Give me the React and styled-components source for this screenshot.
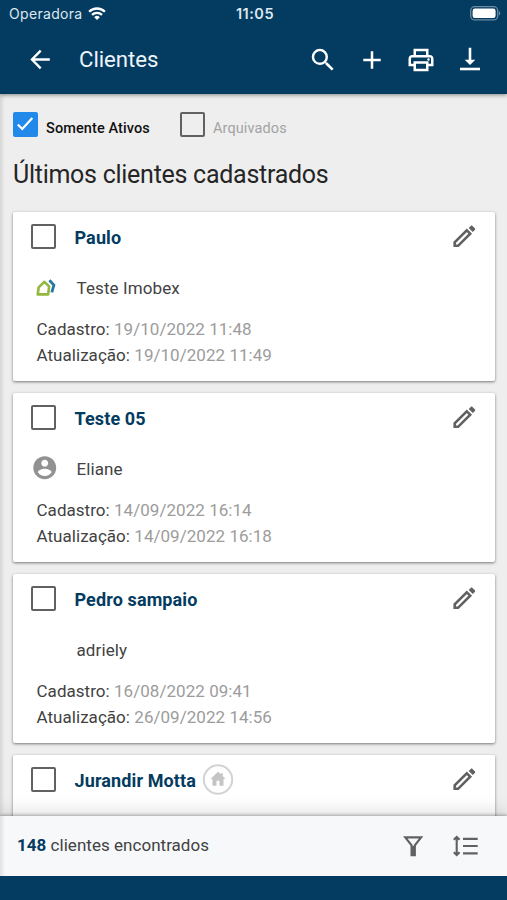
import React, { Component } from 'react';
import styled, { createGlobalStyle } from 'styled-components';

const navy = "#043b60";
const grey2 = "#252525";
const grey4 = "#424242";
const grey6 = "#616161";
const grey9 = "#9c9c9c";
const greyc = "#c4c4c4";
const greye = "#eeeeee";
const white = "#ffffff";

const GlobalStyle = createGlobalStyle`
    * { box-sizing: border-box; }
    body {
        margin: 0;
        background-color: ${greye};
        font-family: Roboto, "Liberation Sans", sans-serif;
        -webkit-font-smoothing: antialiased;
    }
`;

const Screen = styled.div`
    display: flex;
    flex-direction: column;
    width: 507px;
    height: 900px;
    overflow: hidden;
    background: linear-gradient(to right, #d6d6d6, ${greye} 5px);
`;

const Header = styled.header`
    position: relative;
    z-index: 2;
    flex: none;
    height: 94px;
    color: ${white};
    background-color: ${navy};
    box-shadow: 0 1px 4px rgba(0, 0, 0, 0.45);
`;

const StatusBar = styled.div`
    display: grid;
    grid-template-columns: 1fr auto 1fr;
    align-items: center;
    height: 27px;
    padding: 0 6px 0 9px;
    color: #dfe8ef;
`;

const Carrier = styled.span`
    display: flex;
    align-items: center;
    gap: 5px;
    font-family: Inter, Roboto, sans-serif;
    font-size: 14px;
    letter-spacing: 0.32px;
`;

const Clock = styled.span`
    font-family: Inter, Roboto, sans-serif;
    font-size: 14.5px;
    font-weight: 600;
    letter-spacing: 0.5px;
`;

const Battery = styled.svg`
    justify-self: end;
`;

const Toolbar = styled.div`
    display: flex;
    align-items: center;
    height: 66px;
    padding: 0 22px 0 25px;
`;

const Title = styled.h1`
    flex: 1;
    margin: -2px 0 0 24px;
    font-size: 22.2px;
    font-weight: 400;
    letter-spacing: -0.05px;
    color: #edf4fa;
`;

const Actions = styled.div`
    display: flex;
    gap: 19px;
`;

const IconButton = styled.button`
    display: flex;
    padding: 0;
    border: 0;
    color: inherit;
    background: none;
`;

const Content = styled.main`
    flex: 1;
    min-height: 0;
    overflow: hidden;
    padding: 17px 12px 0 13px;
`;

const Filters = styled.div`
    display: flex;
    height: 27px;
`;

const FilterItem = styled.label`
    display: flex;
    align-items: center;
    width: 167px;
    height: 27px;
`;

const FilterText = styled.span`
    margin: 7px 0 0 8px;
    font-size: 14.5px;
    font-weight: ${props => props.$active ? 500 : 400};
    letter-spacing: 0.1px;
    color: ${props => props.$active ? "#111111" : "#a3a3a3"};
`;

const Box = styled.span`
    display: flex;
    align-items: center;
    justify-content: center;
    flex: none;
    width: 25px;
    height: 25px;
    border: 2px solid ${props => props.$checked ? "#2089ea" : grey6};
    border-radius: 2px;
    background-color: ${props => props.$checked ? "#2089ea" : "transparent"};
`;

const Heading = styled.h2`
    margin: 21px 0 22px;
    font-size: 25px;
    font-weight: 400;
    line-height: 31px;
    letter-spacing: -0.27px;
    color: ${grey2};
`;

const List = styled.div`
    display: flex;
    flex-direction: column;
    gap: 12px;
`;

const Card = styled.article`
    flex: none;
    height: 169px;
    padding: 11px 18px 0;
    border-radius: 2px;
    background-color: ${white};
    box-shadow: 0 1px 3px rgba(0, 0, 0, 0.5);
`;

const CardHead = styled.div`
    display: flex;
    align-items: center;
    height: 26px;
`;

const Name = styled.strong`
    margin: 2px 0 0 18.5px;
    font-size: 18px;
    font-weight: 700;
    letter-spacing: 0.12px;
    color: ${navy};
`;

const EditButton = styled(IconButton)`
    margin-left: auto;
    color: ${grey6};
`;

const HomeBadge = styled.svg`
    margin: 0 0 0 6px;
`;

const Owner = styled.div`
    display: flex;
    align-items: center;
    height: 26px;
    margin-top: 26px;
    font-size: 17px;
    letter-spacing: 0.1px;
    color: ${grey4};
`;

const OwnerIcon = styled.span`
    display: flex;
    width: 45.5px;
    margin-top: -2px;
    color: #929292;
`;

const Dates = styled.div`
    margin: 15px 0 0 5.5px;
    font-size: 17px;
    line-height: 26px;
    letter-spacing: 0.04px;
    color: ${grey4};

    span {
        color: ${grey9};
    }
`;

const Footer = styled.footer`
    position: relative;
    z-index: 2;
    flex: none;
    display: flex;
    align-items: center;
    height: 60px;
    padding: 0 28px 0 17px;
    font-size: 17px;
    color: ${grey4};
    background: linear-gradient(to right, #dfe1e2, #f6f8fa 5px);
    box-shadow: 0 -1px 3px rgba(0, 0, 0, 0.3), 0 -5px 16px rgba(0, 0, 0, 0.12);
`;

const Total = styled.span`
    flex: 1;
    padding-bottom: 2px;
    letter-spacing: 0.03px;

    b {
        color: ${navy};
    }
`;

const FooterActions = styled.div`
    display: flex;
    align-items: center;
    gap: 28px;
    color: ${grey6};
`;

const BottomBar = styled.div`
    position: relative;
    z-index: 3;
    flex: none;
    height: 24px;
    background-color: ${navy};
`;

const paths = {
    search: "M15.5 14h-.79l-.28-.27A6.47 6.47 0 0 0 16 9.500 6.5 6.5 0 1 0 9.500 16c1.610 0 3.090-.59 4.230-1.570l.27.28v.79l5 4.990L20.490 19l-4.990-5zm-6 0C7.010 14 5 11.990 5 9.500S7.010 5 9.500 5 14 7.010 14 9.500 11.990 14 9.500 14z",
    add: "M19 13h-6v6h-2v-6H5v-2h6V5h2v6h6v2z",
    print: "M19 8h-1V3H6v5H5c-1.660 0-3 1.340-3 3v6h4v4h12v-4h4v-6c0-1.660-1.340-3-3-3zM8 5h8v3H8V5zm8 12v2H8v-4h8v2zm2-2v-2H6v2H4v-4c0-.55.45-1 1-1h14c.55 0 1 .45 1 1v4h-2z M17 11.500a1 1 0 1 0 2 0a1 1 0 1 0-2 0z",
    account: "M12 2C6.480 2 2 6.480 2 12s4.480 10 10 10 10-4.480 10-10S17.520 2 12 2zm0 3c1.660 0 3 1.340 3 3s-1.340 3-3 3-3-1.340-3-3 1.340-3 3-3zm0 14.200c-2.500 0-4.710-1.280-6-3.220.03-1.990 4-3.080 6-3.080 1.990 0 5.970 1.090 6 3.080-1.290 1.940-3.500 3.220-6 3.220z",
};

const Glyph = ({ name, size = 30 }) => (
    <svg width={size} height={size} viewBox="0 0 24 24" fill="currentColor">
        <path d={paths[name]} />
    </svg>
)

const BackIcon = () => (
    <svg width="30" height="30" viewBox="0 0 30 30" fill="none" stroke="currentColor" strokeWidth="2.400">
        <path d="M24.800 14.500H7M15.700 5.700L7 14.500l8.700 8.800" />
    </svg>
)

const DownloadIcon = () => (
    <svg width="30" height="30" viewBox="0 0 30 30" fill="currentColor">
        <path d="M13.700 2.800h2.600v12h4L15 20.100l-5.300-5.300h4z" />
        <path d="M5 22.700h20v2.600H5z" />
    </svg>
)

const WifiIcon = () => (
    <svg width="18" height="14" viewBox="0 0 18 14" fill="none" stroke={white} strokeWidth="2.300">
        <path d="M1.100 4.700a11.300 11.300 0 0 1 15.800 0" />
        <path d="M4 7.900a7.200 7.200 0 0 1 10 0" />
        <path d="M9 13L6.200 10.200a4 4 0 0 1 5.600 0z" fill={white} stroke="none" />
    </svg>
)

const BatteryIcon = () => (
    <Battery width="31" height="15" viewBox="0 0 31 15">
        <rect x="0.700" y="0.700" width="27" height="13.200" rx="4" fill="none" stroke="#6b8ba2" strokeWidth="1.300" />
        <rect x="2.600" y="2.600" width="23" height="9.400" rx="2.300" fill={white} />
        <path d="M29 5v4.500c1.800-.8 1.800-3.700 0-4.500z" fill="#6b8ba2" />
    </Battery>
)

const CheckIcon = () => (
    <svg width="21" height="21" viewBox="0 0 21 21" fill="none" stroke={white} strokeWidth="2.200">
        <path d="M2.800 10.500l4.500 4.500L17.300 4" />
    </svg>
)

const PencilIcon = () => (
    <svg width="25" height="26" viewBox="0 0 25 26" fill="none" stroke="currentColor">
        <path d="M2.700 22.800v-3.400L14.800 7.300l3.400 3.400L6.100 22.800z" strokeWidth="2.600" />
        <path d="M16.700 5l2-2c.6-.6 1.200-.6 1.800 0l2.300 2.300c.6.6.6 1.200 0 1.800l-2 2z" fill="currentColor" stroke="none" />
    </svg>
)

const ImobexIcon = () => (
    <svg width="27" height="27" viewBox="0 0 27 27" fill="none">
        <path d="M6.700 20.400L7.700 13.300l5.500-5.500 4.900 4.600-.9 8z" stroke="#93b83c" strokeWidth="2.600" strokeLinejoin="round" />
        <path d="M18.400 6.200l4.500 4.900-2.100 7.200" stroke="#2676a3" strokeWidth="2.800" />
    </svg>
)

const HomeIcon = () => (
    <HomeBadge width="32" height="32" viewBox="0 0 32 32">
        <circle cx="16" cy="16.500" r="14.200" fill="none" stroke="#d3d3d3" strokeWidth="2" />
        <path d="M16 8.700L8.500 16h2v6.700h4v-4.900h3v4.900h4V16h2l-2.700-2.700v-3h-2v1z" fill={greyc} />
    </HomeBadge>
)

const FunnelIcon = () => (
    <svg width="24" height="24" viewBox="0 0 24 24" fill="none" stroke="currentColor" strokeWidth="2.200">
        <path d="M4.300 3.400h15.800l-6.300 8v9.700h-3.200v-9.700z" />
        <path d="M12.200 12v10" strokeWidth="3" />
    </svg>
)

const SortIcon = () => (
    <svg width="26" height="24" viewBox="0 0 26 24" fill="none" stroke="currentColor" strokeWidth="2.100">
        <path d="M3.700 4v16M.8 5.800L3.700 3l2.900 2.800M.8 18.200L3.700 21l2.900-2.800" />
        <path d="M10 4.800h14.700M10 12h14.700M10 19.300h14.700" strokeWidth="2.200" />
    </svg>
)

const clients = [
    { name: "Paulo", owner: "Teste Imobex", icon: "imobex", created: "19/10/2022 11:48", updated: "19/10/2022 11:49" },
    { name: "Teste 05", owner: "Eliane", icon: "account", created: "14/09/2022 16:14", updated: "14/09/2022 16:18" },
    { name: "Pedro sampaio", owner: "adriely", created: "16/08/2022 09:41", updated: "26/09/2022 14:56" },
    { name: "Jurandir Motta", home: true },
];

const ClientCard = ({ name, owner, icon, created, updated, home }) => (
    <Card>
        <CardHead>
            <Box />
            <Name>{name}</Name>
            {home && <HomeIcon />}
            <EditButton aria-label="Editar"><PencilIcon /></EditButton>
        </CardHead>
        {owner && (
            <Owner>
                <OwnerIcon>
                    {icon === "imobex" && <ImobexIcon />}
                    {icon === "account" && <Glyph name="account" size={27.5} />}
                </OwnerIcon>
                {owner}
            </Owner>
        )}
        {created && (
            <Dates>
                <div>Cadastro: <span>{created}</span></div>
                <div>Atualização: <span>{updated}</span></div>
            </Dates>
        )}
    </Card>
)

class App extends Component {
    render() {
        return (
            <Screen>
                <GlobalStyle />
                <Header>
                    <StatusBar>
                        <Carrier>Operadora <WifiIcon /></Carrier>
                        <Clock>11:05</Clock>
                        <BatteryIcon />
                    </StatusBar>
                    <Toolbar>
                        <IconButton aria-label="Voltar"><BackIcon /></IconButton>
                        <Title>Clientes</Title>
                        <Actions>
                            <IconButton aria-label="Buscar"><Glyph name="search" /></IconButton>
                            <IconButton aria-label="Adicionar"><Glyph name="add" /></IconButton>
                            <IconButton aria-label="Imprimir"><Glyph name="print" /></IconButton>
                            <IconButton aria-label="Baixar"><DownloadIcon /></IconButton>
                        </Actions>
                    </Toolbar>
                </Header>
                <Content>
                    <Filters>
                        <FilterItem>
                            <Box $checked><CheckIcon /></Box>
                            <FilterText $active>Somente Ativos</FilterText>
                        </FilterItem>
                        <FilterItem>
                            <Box />
                            <FilterText>Arquivados</FilterText>
                        </FilterItem>
                    </Filters>
                    <Heading>Últimos clientes cadastrados</Heading>
                    <List>
                        {clients.map(client => <ClientCard key={client.name} {...client} />)}
                    </List>
                </Content>
                <Footer>
                    <Total><b>148</b> clientes encontrados</Total>
                    <FooterActions>
                        <IconButton aria-label="Filtrar"><FunnelIcon /></IconButton>
                        <IconButton aria-label="Ordenar"><SortIcon /></IconButton>
                    </FooterActions>
                </Footer>
                <BottomBar />
            </Screen>
        )
    }
}

export default App;
